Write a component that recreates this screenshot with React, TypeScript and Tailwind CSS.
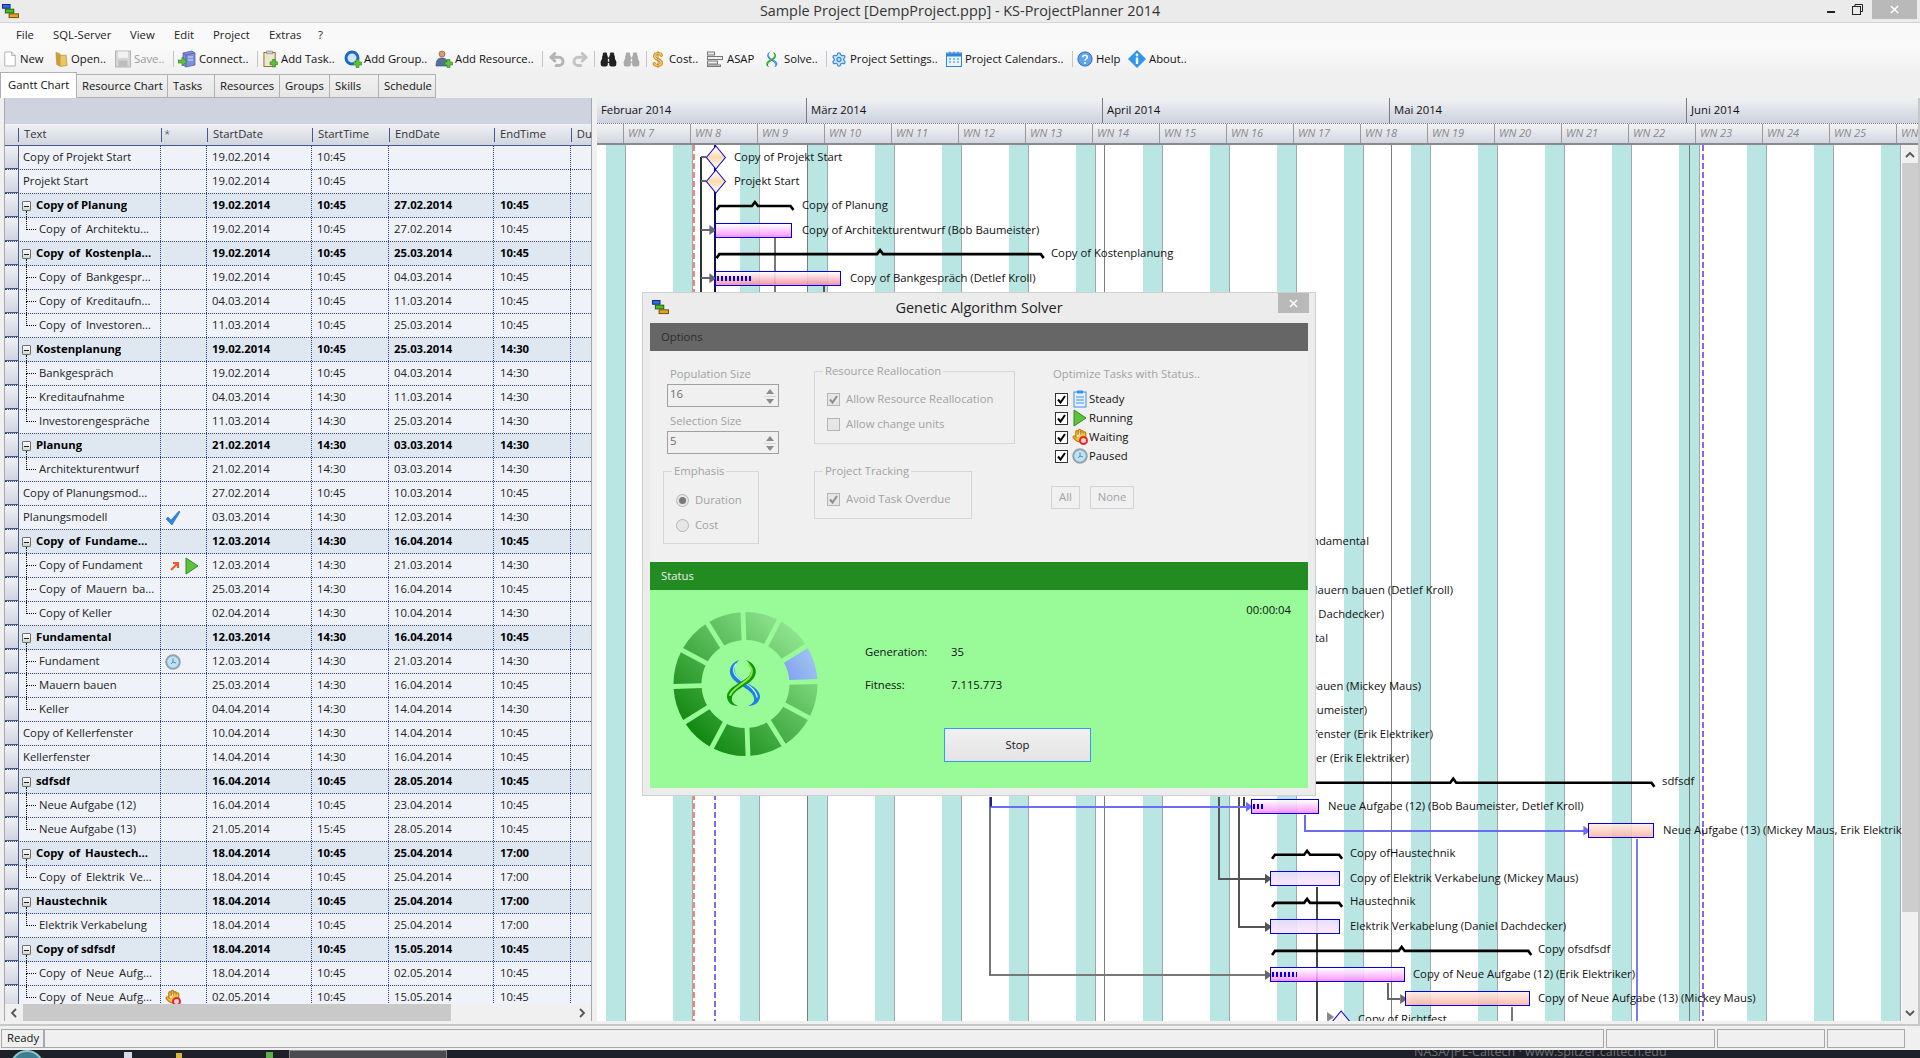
import type { JSX, ReactNode } from "react";
import { Binoculars, Hand, Redo2, Settings, Undo2 } from "lucide-react";

type Row = {
  text: string;
  kind: "top" | "group" | "child" | "last";
  start: string;
  startTime: string;
  end?: string;
  endTime?: string;
  icon?: "check" | "running" | "paused" | "waiting";
  wide?: boolean;
};

const g = (text: string, start: string, startTime: string, end: string, endTime: string, wide = false): Row => ({ text, kind: "group", start, startTime, end, endTime, wide });
const c = (text: string, start: string, startTime: string, end: string, endTime: string, wide = false): Row => ({ text, kind: "child", start, startTime, end, endTime, wide });
const l = (text: string, start: string, startTime: string, end: string, endTime: string, wide = false): Row => ({ text, kind: "last", start, startTime, end, endTime, wide });
const t = (text: string, start: string, startTime: string, end?: string, endTime?: string): Row => ({ text, kind: "top", start, startTime, end, endTime });

const ROWS: Row[] = [
  t("Copy of Projekt Start", "19.02.2014", "10:45"),
  t("Projekt Start", "19.02.2014", "10:45"),
  g("Copy of Planung", "19.02.2014", "10:45", "27.02.2014", "10:45"),
  l("Copy of Architektu...", "19.02.2014", "10:45", "27.02.2014", "10:45", true),
  g("Copy of Kostenpla...", "19.02.2014", "10:45", "25.03.2014", "10:45", true),
  c("Copy of Bankgespr...", "19.02.2014", "10:45", "04.03.2014", "10:45", true),
  c("Copy of Kreditaufn...", "04.03.2014", "10:45", "11.03.2014", "10:45", true),
  l("Copy of Investoren...", "11.03.2014", "10:45", "25.03.2014", "10:45", true),
  g("Kostenplanung", "19.02.2014", "10:45", "25.03.2014", "14:30"),
  c("Bankgespräch", "19.02.2014", "10:45", "04.03.2014", "14:30"),
  c("Kreditaufnahme", "04.03.2014", "14:30", "11.03.2014", "14:30"),
  l("Investorengespräche", "11.03.2014", "14:30", "25.03.2014", "14:30"),
  g("Planung", "21.02.2014", "14:30", "03.03.2014", "14:30"),
  l("Architekturentwurf", "21.02.2014", "14:30", "03.03.2014", "14:30"),
  t("Copy of Planungsmod...", "27.02.2014", "10:45", "10.03.2014", "10:45"),
  { ...t("Planungsmodell", "03.03.2014", "14:30", "12.03.2014", "14:30"), icon: "check" },
  g("Copy of Fundame...", "12.03.2014", "14:30", "16.04.2014", "10:45", true),
  { ...c("Copy of Fundament", "12.03.2014", "14:30", "21.03.2014", "14:30"), icon: "running" },
  c("Copy of Mauern ba...", "25.03.2014", "14:30", "16.04.2014", "10:45", true),
  l("Copy of Keller", "02.04.2014", "14:30", "10.04.2014", "14:30"),
  g("Fundamental", "12.03.2014", "14:30", "16.04.2014", "10:45"),
  { ...c("Fundament", "12.03.2014", "14:30", "21.03.2014", "14:30"), icon: "paused" },
  c("Mauern bauen", "25.03.2014", "14:30", "16.04.2014", "10:45"),
  l("Keller", "04.04.2014", "14:30", "14.04.2014", "14:30"),
  t("Copy of Kellerfenster", "10.04.2014", "14:30", "14.04.2014", "10:45"),
  t("Kellerfenster", "14.04.2014", "14:30", "16.04.2014", "10:45"),
  g("sdfsdf", "16.04.2014", "10:45", "28.05.2014", "10:45"),
  c("Neue Aufgabe (12)", "16.04.2014", "10:45", "23.04.2014", "10:45"),
  l("Neue Aufgabe (13)", "21.05.2014", "15:45", "28.05.2014", "10:45"),
  g("Copy of Haustech...", "18.04.2014", "10:45", "25.04.2014", "17:00", true),
  l("Copy of Elektrik Ve...", "18.04.2014", "10:45", "25.04.2014", "17:00", true),
  g("Haustechnik", "18.04.2014", "10:45", "25.04.2014", "17:00"),
  l("Elektrik Verkabelung", "18.04.2014", "10:45", "25.04.2014", "17:00"),
  g("Copy of sdfsdf", "18.04.2014", "10:45", "15.05.2014", "10:45"),
  c("Copy of Neue Aufg...", "18.04.2014", "10:45", "02.05.2014", "10:45", true),
  { ...l("Copy of Neue Aufg...", "02.05.2014", "10:45", "15.05.2014", "10:45", true), icon: "waiting" },
];

const WEEK_X = Array.from({ length: 20 }, (_, i) => 625 + 67 * i);
const MONTH_X = [807, 1103, 1390, 1687];

const BARS = [
  { x: 716, y: 223, w: 77, kind: "pink", done: 0 },
  { x: 716, y: 271, w: 126, kind: "rose", done: 36 },
  { x: 1252, y: 799, w: 68, kind: "pink", done: 12 },
  { x: 1589, y: 823, w: 66, kind: "salmon", done: 0 },
  { x: 1271, y: 871, w: 70, kind: "lav", done: 0 },
  { x: 1271, y: 919, w: 70, kind: "lav", done: 0 },
  { x: 1271, y: 967, w: 135, kind: "pink", done: 25 },
  { x: 1406, y: 991, w: 125, kind: "salmon", done: 0 },
];

const BAR_FILL: Record<string, string> = {
  pink: "bg-gradient-to-b from-white/90 to-[#ff80ff]/85",
  rose: "bg-gradient-to-b from-white/90 to-[#f08aa0]/90",
  salmon: "bg-gradient-to-b from-[#ffeee8]/90 to-[#ffb0a0]/85",
  lav: "bg-gradient-to-b from-[#e6dcf8]/90 to-[#ffe6ff]/90",
};

const LABELS: { text: string; x?: number; endX?: number; y: number }[] = [
  { text: "Copy of Projekt Start", x: 735, y: 157 },
  { text: "Projekt Start", x: 735, y: 181 },
  { text: "Copy of Planung", x: 803, y: 205 },
  { text: "Copy of Architekturentwurf (Bob Baumeister)", x: 803, y: 230 },
  { text: "Copy of Kostenplanung", x: 1052, y: 253 },
  { text: "Copy of Bankgespräch (Detlef Kroll)", x: 851, y: 278 },
  { text: "Copy of Fundamental", endX: 1366, y: 541 },
  { text: "Copy of Mauern bauen (Detlef Kroll)", endX: 1450, y: 590 },
  { text: "Copy of Keller (Daniel Dachdecker)", endX: 1381, y: 614 },
  { text: "Fundamental", endX: 1325, y: 638 },
  { text: "Mauern bauen (Mickey Maus)", endX: 1418, y: 686 },
  { text: "Keller (Bob Baumeister)", endX: 1364, y: 710 },
  { text: "Copy of Kellerfenster (Erik Elektriker)", endX: 1430, y: 734 },
  { text: "Kellerfenster (Erik Elektriker)", endX: 1406, y: 758 },
  { text: "sdfsdf", x: 1663, y: 781 },
  { text: "Neue Aufgabe (12) (Bob Baumeister, Detlef Kroll)", x: 1329, y: 806 },
  { text: "Neue Aufgabe (13) (Mickey Maus, Erik Elektriker)", x: 1664, y: 830 },
  { text: "Copy ofHaustechnik", x: 1351, y: 853 },
  { text: "Copy of Elektrik Verkabelung (Mickey Maus)", x: 1351, y: 878 },
  { text: "Haustechnik", x: 1351, y: 901 },
  { text: "Elektrik Verkabelung (Daniel Dachdecker)", x: 1351, y: 926 },
  { text: "Copy ofsdfsdf", x: 1539, y: 949 },
  { text: "Copy of Neue Aufgabe (12) (Erik Elektriker)", x: 1414, y: 974 },
  { text: "Copy of Neue Aufgabe (13) (Mickey Maus)", x: 1539, y: 998 },
  { text: "Copy of Richtfest", x: 1359, y: 1019 },
];

const BRACKETS = [
  { x1: 716, x2: 793, y: 206 },
  { x1: 716, x2: 1043, y: 254 },
  { x1: 950, x2: 1653, y: 782, tip: 1452 },
  { x1: 1271, x2: 1341, y: 854 },
  { x1: 1271, x2: 1341, y: 902 },
  { x1: 1271, x2: 1530, y: 950 },
];

const LINES = [
  { d: "M701 157V292", s: "#333", w: 2 },
  { d: "M701 157H706M701 181H706", s: "#666", w: 2 },
  { d: "M701 230H710M701 278H710", s: "#666", w: 2 },
  { d: "M715 145V292", s: "#10104a", w: 2 },
  { d: "M775 237V292", s: "#777", w: 2 },
  { d: "M823 285V292", s: "#555", w: 2 },
  { d: "M1218 796V878H1264", s: "#555", w: 2 },
  { d: "M1238 796V926H1264", s: "#555", w: 2 },
  { d: "M1243 796V806", s: "#444", w: 2 },
  { d: "M989 796V974H1264", s: "#777", w: 2 },
  { d: "M990 796V806", s: "#20208a", w: 2 },
  { d: "M990 806H1245", s: "#6c6cf2", w: 2 },
  { d: "M1304 814V830H1583", s: "#6c6cf2", w: 2 },
  { d: "M1636 838V1020", s: "#7a7af5", w: 2 },
  { d: "M1316 886V1020", s: "#444", w: 1.5 },
  { d: "M1387 982V998H1399", s: "#666", w: 2 },
  { d: "M1511 1006V1020", s: "#777", w: 2 },
];

const ARROWS = [
  { x: 716, y: 230, f: "#666" },
  { x: 716, y: 278, f: "#666" },
  { x: 1252, y: 806, f: "#6c6cf2" },
  { x: 1589, y: 830, f: "#6c6cf2" },
  { x: 1271, y: 878, f: "#555" },
  { x: 1271, y: 926, f: "#555" },
  { x: 1271, y: 974, f: "#666" },
  { x: 1406, y: 998, f: "#666" },
  { x: 1333, y: 1016, f: "#888" },
];

function AppLogo({ className }: { className: string }): JSX.Element {
  return (
    <svg viewBox="0 0 18 16" className={className}>
      <rect x="0.5" y="0.5" width="8" height="4" fill="#2a6cf0" stroke="#102070" />
      <rect x="3.5" y="5.5" width="9" height="4" fill="#3fc41a" stroke="#1d5c10" />
      <rect x="7.5" y="10.5" width="10" height="4" fill="#e3a51c" stroke="#6b4a08" />
    </svg>
  );
}

function DocIcon(): JSX.Element {
  return (
    <svg viewBox="0 0 16 18" className="h-[18px] w-[14px] shrink-0">
      <path d="M2 1h8l4 4v12H2z" fill="#fff" stroke="#a9a9a9" />
      <path d="M10 1v4h4" fill="#eee" stroke="#a9a9a9" />
    </svg>
  );
}

function FolderIcon(): JSX.Element {
  return (
    <svg viewBox="0 0 14 18" className="h-[18px] w-[13px] shrink-0">
      <path d="M1 2l4 1 1 2 6 0 1 11-7 1-4-2z" fill="#e9c66a" stroke="#b08b35" strokeWidth=".7" />
      <path d="M1 2l5 3v12l-4-2z" fill="#c99c3c" />
    </svg>
  );
}

function SaveIcon(): JSX.Element {
  return (
    <svg viewBox="0 0 16 18" className="h-[18px] w-[16px] shrink-0">
      <rect x="0.5" y="1" width="15" height="16" fill="#d6d6d6" stroke="#b5b5b5" />
      <rect x="3" y="1.5" width="10" height="6.5" fill="#f1f1f1" />
      <rect x="3.5" y="10.5" width="9" height="6" fill="#bdbdbd" />
    </svg>
  );
}

function PlusBadge({ x = 8, y = 9 }: { x?: number; y?: number }): JSX.Element {
  return <path transform={`translate(${x} ${y})`} d="M2.5 0h3v2.5H8v3H5.5V8h-3V5.5H0v-3h2.5z" fill="#5cc23a" stroke="#2f7d1f" strokeWidth=".6" />;
}

function ConnectIcon(): JSX.Element {
  return (
    <svg viewBox="0 0 18 18" className="h-[18px] w-[18px] shrink-0">
      <path d="M5 3l9-2 3 2v12l-9 2-3-2z" fill="#7f8fd8" stroke="#48559c" strokeWidth=".7" />
      <path d="M5 3l3 2 9-2M8 5v12" fill="none" stroke="#48559c" strokeWidth=".7" />
      <path d="M10 7h5M10 10h5" stroke="#d8defa" />
      <path d="M0 10h4V7l5 4.5L4 16v-3H0z" fill="#5cc23a" stroke="#2f7d1f" strokeWidth=".6" />
    </svg>
  );
}

function TaskIcon(): JSX.Element {
  return (
    <svg viewBox="0 0 16 18" className="h-[18px] w-[15px] shrink-0">
      <rect x="1" y="2" width="12" height="15" fill="#eee7d0" stroke="#8d6a34" />
      <rect x="4" y="0.5" width="6" height="3" fill="#cfcfcf" stroke="#777" strokeWidth=".6" />
      <PlusBadge x={7.5} y={9.5} />
    </svg>
  );
}

function GroupIcon(): JSX.Element {
  return (
    <svg viewBox="0 0 18 18" className="h-[18px] w-[18px] shrink-0">
      <circle cx="8" cy="8" r="6" fill="#cfe6fa" stroke="#1867c9" strokeWidth="3" />
      <PlusBadge x={9.5} y={9.5} />
    </svg>
  );
}

function ResourceIcon(): JSX.Element {
  return (
    <svg viewBox="0 0 18 18" className="h-[18px] w-[18px] shrink-0">
      <circle cx="7" cy="4" r="3" fill="#d79b6a" stroke="#7c5330" strokeWidth=".6" />
      <path d="M1 16c0-6 2-8 6-8s6 2 6 8z" fill="#54719c" stroke="#2f4366" strokeWidth=".6" />
      <PlusBadge x={9.5} y={9.5} />
    </svg>
  );
}

function CostIcon(): JSX.Element {
  return (
    <svg viewBox="0 0 12 20" className="h-[19px] w-[12px] shrink-0" fill="none">
      <path d="M9.5 5.5C8.5 3 2.5 3 2.5 6.5s7 3.5 7 7-6.5 3.5-7.5 1" stroke="#c98a22" strokeWidth="3.4" strokeLinecap="round" />
      <path d="M9.5 5.5C8.5 3 2.5 3 2.5 6.5s7 3.5 7 7-6.5 3.5-7.5 1" stroke="#f7cf7c" strokeWidth="1.4" strokeLinecap="round" />
      <path d="M6 1v18" stroke="#c98a22" strokeWidth="1" />
    </svg>
  );
}

function AsapIcon(): JSX.Element {
  return (
    <svg viewBox="0 0 16 16" className="h-[16px] w-[16px] shrink-0" fill="#eee" stroke="#777">
      <rect x="0.5" y="1" width="7" height="3" />
      <rect x="0.5" y="5.5" width="15" height="3" />
      <rect x="0.5" y="10" width="10" height="3" />
      <rect x="0.5" y="14" width="13" height="1.5" />
    </svg>
  );
}

function DnaRibbons(): JSX.Element {
  return (
    <>
      <path d="M66 48C57 51 54 60 60 67C66 74 80 78 81 86C82 90 79 92 75 94C82 94 87 90 87 84C86 75 72 71 65 65C60 60 61 53 66 48Z" fill="#1a80e8" />
      <path d="M63 52C59 57 60 62 65 66C71 71 83 76 84 85" fill="none" stroke="#c8eaff" strokeWidth="1.4" strokeLinecap="round" />
      <path d="M73 48C82 51 86 60 80 67C74 74 60 78 59 86C58 90 61 92 65 94C58 94 54 90 54 84C55 75 68 71 75 65C80 60 79 53 73 48Z" fill="#0f960f" />
      <path d="M76 53C80 57 80 62 76 66C70 72 60 76 57 83" fill="none" stroke="#8fe83c" strokeWidth="2" strokeLinecap="round" />
    </>
  );
}

function DnaMini(): JSX.Element {
  return (
    <svg viewBox="50 46 42 50" className="h-[19px] w-[14px] shrink-0">
      <DnaRibbons />
    </svg>
  );
}

function CalendarIcon(): JSX.Element {
  return (
    <svg viewBox="0 0 16 16" className="h-[16px] w-[16px] shrink-0">
      <rect x="0.5" y="2" width="15" height="13.5" fill="#eaf4ff" stroke="#2d86d6" />
      <rect x="1" y="2.5" width="14" height="3" fill="#2d86d6" />
      <path d="M4 0.5v3M8 0.5v3M12 0.5v3" stroke="#2d86d6" />
      <path d="M3 8h2M7 8h2M11 8h2M3 11h2M7 11h2M11 11h2" stroke="#2d86d6" />
    </svg>
  );
}

function HelpIcon(): JSX.Element {
  return (
    <svg viewBox="0 0 18 18" className="h-[18px] w-[16px] shrink-0" fill="none">
      <circle cx="9" cy="9" r="8" fill="#5fa3ea" stroke="#1c62b8" />
      <path d="M6.5 7c0-3 5-3 5 0 0 2-2.500 2-2.500 4" stroke="#fff" strokeWidth="1.8" />
      <circle cx="9" cy="13.5" r="1.1" fill="#fff" />
    </svg>
  );
}

function InfoIcon(): JSX.Element {
  return (
    <svg viewBox="0 0 18 18" className="h-[18px] w-[18px] shrink-0">
      <path d="M9 0l9 9-9 9-9-9z" fill="#2f96ec" />
      <circle cx="9" cy="5" r="1.4" fill="#fff" />
      <rect x="7.8" y="7.5" width="2.4" height="6.5" fill="#fff" />
    </svg>
  );
}

function BlueCheck(): JSX.Element {
  return (
    <svg viewBox="0 0 16 16" className="h-[16px] w-[16px]">
      <path d="M1 9l2-2 3 3 8-9 1 1-8 13z" fill="#2f86e2" stroke="#1a5fb0" strokeWidth=".5" />
    </svg>
  );
}

function PlayIcon({ className = "h-[18px] w-[14px]" }: { className?: string }): JSX.Element {
  return (
    <svg viewBox="0 0 14 18" className={className}>
      <path d="M1 1l12 8-12 8z" fill="#5ec23c" stroke="#2f8a1f" />
    </svg>
  );
}

function ClockIcon(): JSX.Element {
  return (
    <svg viewBox="0 0 16 16" className="h-[16px] w-[16px]">
      <circle cx="8" cy="8" r="6.8" fill="#b8e4f7" stroke="#97a3ab" strokeWidth="2" />
      <path d="M8 4.500v3.500l-2 2M8 8l3 1" stroke="#6d8296" fill="none" />
    </svg>
  );
}

function WaitingIcon(): JSX.Element {
  return (
    <div className="relative h-[18px] w-[16px]">
      <Hand className="h-[15px] w-[15px] fill-[#f3c23c] text-[#c0831a]" strokeWidth={2} />
      <div className="absolute bottom-[1px] right-0 h-[9px] w-[9px] rounded-full border-2 border-[#e02a2a] bg-[#f8d0d0]" />
    </div>
  );
}

function ClipIcon(): JSX.Element {
  return (
    <svg viewBox="0 0 14 18" className="h-[18px] w-[14px]">
      <rect x="1" y="2" width="12" height="15" fill="#e6f3ff" stroke="#3b8fe0" />
      <rect x="4" y="0.5" width="6" height="3" fill="#3b8fe0" />
      <path d="M3 7h8M3 10h8M3 13h8" stroke="#3b8fe0" />
    </svg>
  );
}

function MenuBar(): JSX.Element {
  return (
    <div className="flex h-[24px] shrink-0 items-center bg-[#f9f9f9] pl-[16px] text-[#222]">
      <span className="w-[37px]">File</span>
      <span className="w-[77px]">SQL-Server</span>
      <span className="w-[44px]">View</span>
      <span className="w-[39px]">Edit</span>
      <span className="w-[56px]">Project</span>
      <span className="w-[49px]">Extras</span>
      <span>?</span>
    </div>
  );
}

function Tool({ icon, label, className, disabled }: { icon: ReactNode; label?: string; className: string; disabled?: boolean }): JSX.Element {
  return (
    <div className={`flex shrink-0 items-center gap-[3px] ${className} ${disabled ? "text-[#9a9a9a]" : "text-[#111]"}`}>
      {icon}
      {label && <span className="whitespace-nowrap">{label}</span>}
    </div>
  );
}

function Sep({ className }: { className: string }): JSX.Element {
  return (
    <div className={`flex shrink-0 ${className}`}>
      <div className="h-[16px] w-px bg-[#c4c4c4]" />
    </div>
  );
}

function Toolbar(): JSX.Element {
  return (
    <div className="flex h-[24px] shrink-0 items-center bg-gradient-to-b from-[#fafafa] to-[#f1f1f1] pl-[3px]">
      <Tool icon={<DocIcon />} label="New" className="w-[52px]" />
      <Tool icon={<FolderIcon />} label="Open.." className="w-[60px]" />
      <Tool icon={<SaveIcon />} label="Save.." className="w-[58px]" disabled />
      <Sep className="w-[5px]" />
      <Tool icon={<ConnectIcon />} label="Connect.." className="w-[79px]" />
      <Sep className="w-[6px]" />
      <Tool icon={<TaskIcon />} label="Add Task.." className="w-[81px]" />
      <Tool icon={<GroupIcon />} label="Add Group.." className="w-[91px] [&>span]:-ml-px" />
      <Tool icon={<ResourceIcon />} label="Add Resource.." className="w-[107px] [&>span]:-ml-px" />
      <Sep className="w-[6px]" />
      <Tool icon={<Undo2 className="h-[19px] w-[18px] text-[#b4b4b4]" strokeWidth={4} />} className="w-[23px]" />
      <Tool icon={<Redo2 className="h-[19px] w-[18px] text-[#c4c4c4]" strokeWidth={4} />} className="w-[23px]" />
      <Sep className="w-[6px]" />
      <Tool icon={<Binoculars className="h-[17px] w-[17px] fill-[#222] text-[#222]" />} className="w-[23px]" />
      <Tool icon={<Binoculars className="h-[17px] w-[17px] fill-[#aaa] text-[#aaa]" />} className="w-[23px]" />
      <Sep className="w-[6px]" />
      <Tool icon={<CostIcon />} label="Cost.." className="w-[55px] [&>span]:ml-[2px]" />
      <Tool icon={<AsapIcon />} label="ASAP" className="w-[58px] [&>span]:ml-px" />
      <Tool icon={<DnaMini />} label="Solve.." className="w-[61px] [&>span]:ml-[2px]" />
      <Sep className="w-[5px]" />
      <Tool icon={<Settings className="h-[17px] w-[16px] fill-[#cfe5fa] text-[#3f8fdc]" />} label="Project Settings.." className="w-[115px]" />
      <Tool icon={<CalendarIcon />} label="Project Calendars.." className="w-[126px]" />
      <Sep className="w-[5px]" />
      <Tool icon={<HelpIcon />} label="Help" className="w-[51px]" />
      <Tool icon={<InfoIcon />} label="About.." className="w-[90px]" />
    </div>
  );
}

function Tabs(): JSX.Element {
  const tabClass = "flex h-[24px] shrink-0 items-center border border-l-0 border-[#b0b0b0] bg-gradient-to-b from-[#f2f2f2] to-[#e6e6e6] pl-[5px]";
  return (
    <div className="relative z-[1] -mb-px flex h-[27px] shrink-0 items-end bg-[#f0f0f0] text-[#111]">
      <div className="flex h-[26px] w-[77px] shrink-0 items-center border border-b-0 border-[#b0b0b0] bg-white pl-[7px]">Gantt Chart</div>
      <div className={`${tabClass} w-[91px]`}>Resource Chart</div>
      <div className={`${tabClass} w-[47px]`}>Tasks</div>
      <div className={`${tabClass} w-[65px]`}>Resources</div>
      <div className={`${tabClass} w-[50px]`}>Groups</div>
      <div className={`${tabClass} w-[49px]`}>Skills</div>
      <div className={`${tabClass} w-[57px]`}>Schedule</div>
    </div>
  );
}

function Expander(): JSX.Element {
  return (
    <div className="ml-[3px] flex h-full w-[9px] shrink-0 flex-col items-center">
      <div className="h-[7px] shrink-0" />
      <div className="flex h-[10px] w-[9px] shrink-0 items-center justify-center rounded-[1px] border border-[#707070] bg-gradient-to-b from-white to-[#d4d4d4]">
        <div className="h-px w-[5px] bg-[#222]" />
      </div>
      <div className="flex-1 border-l border-dotted border-black" />
    </div>
  );
}

function TreeLine({ last }: { last: boolean }): JSX.Element {
  return (
    <div className="ml-[7px] flex h-full w-[10px] shrink-0 flex-col">
      <div className="h-[12px] shrink-0 border-b border-l border-dotted border-black" />
      {!last && <div className="flex-1 border-l border-dotted border-black" />}
    </div>
  );
}

function StatusCellIcon({ icon }: { icon: Row["icon"] }): JSX.Element | null {
  if (icon === "check") return <BlueCheck />;
  if (icon === "paused") return <ClockIcon />;
  if (icon === "waiting") return <WaitingIcon />;
  if (icon === "running") {
    return (
      <div className="flex items-center gap-[5px] pl-[5px]">
        <svg viewBox="0 0 10 10" className="h-[10px] w-[10px]">
          <path d="M1 9l6-6M3 2h5v5" fill="none" stroke="#ef5a1c" strokeWidth="2" />
        </svg>
        <PlayIcon />
      </div>
    );
  }
  return null;
}

function GridRow({ row }: { row: Row }): JSX.Element {
  const bold = row.kind === "group";
  const cell = "flex h-full shrink-0 items-center border-r border-dotted border-[#2b3f8c] pl-[5px]";
  return (
    <div className={`flex h-[24px] shrink-0 border-b border-dotted border-[#2b3f8c] ${bold ? "bg-[#dfe7f0] font-bold text-black" : "bg-[#eff3f9] text-[#222]"}`}>
      <div className="h-full w-[14px] shrink-0 border-b border-r border-solid border-[#47588f] bg-gradient-to-b from-[#f0f1f5] to-[#cfd4e0]" />
      <div className={`${cell} w-[142px] !pl-0`}>
        {row.kind === "top" && <div className="w-[4px]" />}
        {row.kind === "group" && <Expander />}
        {row.kind === "child" && <TreeLine last={false} />}
        {row.kind === "last" && <TreeLine last />}
        <span className={`overflow-hidden whitespace-nowrap ${row.wide ? "[word-spacing:2px]" : ""} ${row.kind === "group" ? "ml-[5px]" : row.kind === "top" ? "" : "ml-[3px]"}`}>{row.text}</span>
      </div>
      <div className={`${cell} w-[46px] !pl-[4px] overflow-hidden`}>
        <StatusCellIcon icon={row.icon} />
      </div>
      <div className={`${cell} w-[105px]`}>{row.start}</div>
      <div className={`${cell} w-[77px]`}>{row.startTime}</div>
      <div className={`${cell} w-[105px]`}>{row.end}</div>
      <div className={`${cell} w-[77px] !pl-[6px]`}>{row.endTime}</div>
      <div className="h-full flex-1" />
    </div>
  );
}

function HeadCell({ text, className }: { text: string; className: string }): JSX.Element {
  return (
    <div className={`flex h-full shrink-0 items-center ${className}`}>
      <div className="h-[14px] w-px bg-[#47588f]" />
      <span className="pl-[5px] text-[#333]">{text}</span>
    </div>
  );
}

function TaskGrid(): JSX.Element {
  return (
    <div className="ml-[4px] flex h-full w-[588px] shrink-0 flex-col border-l border-r border-[#a8a8a8] bg-[#f0f0f0]">
      <div className="h-[26px] shrink-0 bg-[#cdd3df]" />
      <div className="flex h-[22px] shrink-0 border-b border-[#47588f] bg-gradient-to-b from-[#f0f1f4] to-[#d0d5df]">
        <div className="w-[13px] shrink-0" />
        <HeadCell text="Text" className="w-[143px]" />
        <HeadCell text="*" className="w-[46px] [&>span]:!pl-[2px] [&>span]:font-light" />
        <HeadCell text="StartDate" className="w-[105px]" />
        <HeadCell text="StartTime" className="w-[77px]" />
        <HeadCell text="EndDate" className="w-[105px]" />
        <HeadCell text="EndTime" className="w-[77px]" />
        <HeadCell text="Du" className="w-[21px] overflow-hidden" />
      </div>
      <div className="flex min-h-0 flex-1 flex-col overflow-hidden">
        {ROWS.map((row, i) => (
          <GridRow key={i} row={row} />
        ))}
      </div>
      <div className="flex h-[17px] shrink-0 items-center bg-[#f0f0f0]">
        <svg viewBox="0 0 8 10" className="ml-[5px] h-[10px] w-[8px]" fill="none" stroke="#555" strokeWidth="1.8">
          <path d="M6 1L2 5l4 4" />
        </svg>
        <div className="ml-[5px] h-full w-[428px] bg-[#c9c9c9]" />
        <div className="flex-1" />
        <svg viewBox="0 0 8 10" className="mr-[5px] h-[10px] w-[8px]" fill="none" stroke="#555" strokeWidth="1.8">
          <path d="M2 1l4 4-4 4" />
        </svg>
      </div>
    </div>
  );
}

function bracketPath(x1: number, x2: number, y: number, tip?: number): string {
  const cx = tip ?? (x1 + x2) / 2;
  return `M${x1} ${y + 4}L${x1 + 3} ${y}H${cx - 3}L${cx} ${y - 4}L${cx + 3} ${y}H${x2 - 3}L${x2} ${y + 4}`;
}

function GanttCanvas(): JSX.Element {
  return (
    <div className="relative min-w-0 flex-1 overflow-hidden bg-white">
      <svg viewBox="598 145 1301 875" className="absolute inset-0 h-full w-full" shapeRendering="crispEdges">
        <defs>
          <linearGradient id="ms" x1="0" y1="0" x2="0" y2="1">
            <stop offset="0" stopColor="#fff" />
            <stop offset="0.5" stopColor="#fbdcae" />
            <stop offset="1" stopColor="#fff" />
          </linearGradient>
        </defs>
        {WEEK_X.map((x) => (
          <g key={x}>
            <rect x={x - 19} y="145" width="19" height="875" fill="#b9e6e2" />
            <rect x={x} y="145" width="1" height="875" fill="#9fa8a8" />
          </g>
        ))}
        {MONTH_X.map((x) => (
          <rect key={x} x={x} y="145" width="1" height="875" fill="#7c7c7c" />
        ))}
        <path d="M693.5 145V1020" stroke="#ff7f7f" strokeWidth="2" strokeDasharray="6 3" />
        <path d="M715 145V1020" stroke="#7b6cf0" strokeWidth="2" strokeDasharray="6 3" />
        <path d="M1701 145V1020" stroke="#7b6cf0" strokeWidth="2" strokeDasharray="6 3" />
        {LINES.map((line, i) => (
          <path key={i} d={line.d} fill="none" stroke={line.s} strokeWidth={line.w} />
        ))}
        <g shapeRendering="auto">
          {ARROWS.map((a, i) => (
            <path key={i} d={`M${a.x} ${a.y}l-7 -5v10z`} fill={a.f} />
          ))}
          {BRACKETS.map((b, i) => (
            <path key={i} d={bracketPath(b.x1, b.x2, b.y, b.tip)} fill="none" stroke="#000" strokeWidth="2.6" />
          ))}
          <path d="M715.5 146l9.5 11.5-9.5 11.5-9.5-11.5z" fill="url(#ms)" stroke="#0000e0" />
          <path d="M715.5 170l9.5 11.5-9.5 11.5-9.5-11.5z" fill="url(#ms)" stroke="#0000e0" />
          <path d="M1340 1010l9.5 11.5-9.5 11.5-9.5-11.5z" fill="#fbeef5" stroke="#0000e0" />
        </g>
      </svg>
      {LABELS.map((label) => (
        <div
          key={label.text}
          className="absolute h-[16px] whitespace-nowrap leading-[16px] text-[#111]"
          style={label.endX ? { right: 1899 - label.endX, top: label.y - 153 } : { left: (label.x ?? 0) - 598, top: label.y - 153 }}
        >
          {label.text}
        </div>
      ))}
      {BARS.map((bar, i) => (
        <div
          key={i}
          className={`absolute flex h-[15px] items-center border-[1.5px] border-[#0000e6] pl-px ${BAR_FILL[bar.kind]}`}
          style={{ left: bar.x - 598, top: bar.y - 145, width: bar.w }}
        >
          {bar.done > 0 && <div className="h-[5px] bg-[repeating-linear-gradient(90deg,#0000e0_0_2px,transparent_2px_4px)]" style={{ width: bar.done }} />}
        </div>
      ))}
    </div>
  );
}

const MONTHS = [
  { name: "Februar 2014", w: "w-[209px]" },
  { name: "März 2014", w: "w-[296px]" },
  { name: "April 2014", w: "w-[287px]" },
  { name: "Mai 2014", w: "w-[297px]" },
  { name: "Juni 2014", w: "flex-1" },
];

function GanttPanel(): JSX.Element {
  return (
    <div className="ml-[5px] flex h-full min-w-0 flex-1 flex-col border-r-2 border-[#c8c8c8] pb-[3px]">
      <div className="flex h-[26px] shrink-0 border-b border-dotted border-[#777] bg-gradient-to-b from-[#f0f1f3] to-[#cdd2de] text-[#111]">
        {MONTHS.map((m, i) => (
          <div key={m.name} className={`flex shrink-0 items-center pl-[4px] ${m.w} ${i > 0 ? "border-l border-[#7c7c7c]" : ""}`}>
            {m.name}
          </div>
        ))}
      </div>
      <div className="flex h-[21px] shrink-0 overflow-hidden border-b-2 border-[#8a8a8a] bg-gradient-to-b from-[#f3f4f6] to-[#d2d6e0] text-[11px] italic text-[#888]">
        <div className="w-[27px] shrink-0 border-r border-[#9a9a9a]" />
        {WEEK_X.map((x, i) => (
          <div key={x} className="flex w-[67px] shrink-0 items-center border-r border-[#9a9a9a] pl-[4px]">
            {`WN ${i + 7}`}
          </div>
        ))}
      </div>
      <div className="flex min-h-0 flex-1">
        <GanttCanvas />
        <div className="flex w-[16px] shrink-0 flex-col items-center bg-[#f0f0f0]">
          <svg viewBox="0 0 10 8" className="mt-[6px] h-[8px] w-[10px]" fill="none" stroke="#555" strokeWidth="1.8">
            <path d="M1 6l4-4 4 4" />
          </svg>
          <div className="mt-[4px] h-[749px] w-full bg-[#cdcdcd]" />
          <div className="flex-1" />
          <svg viewBox="0 0 10 8" className="mb-[4px] h-[8px] w-[10px]" fill="none" stroke="#555" strokeWidth="1.8">
            <path d="M1 2l4 4 4-4" />
          </svg>
        </div>
      </div>
    </div>
  );
}

function CheckBox({ checked, disabled }: { checked: boolean; disabled?: boolean }): JSX.Element {
  return (
    <div className={`flex h-[13px] w-[13px] shrink-0 items-center justify-center border ${disabled ? "border-[#b4b4b4] bg-[#e6e6e6]" : "border-[#333] bg-white"}`}>
      {checked && (
        <svg viewBox="0 0 11 11" className="h-[11px] w-[11px]" fill="none" stroke={disabled ? "#8e8e8e" : "#000"} strokeWidth="2">
          <path d="M2 5.5l2.5 3L9 2" />
        </svg>
      )}
    </div>
  );
}

function CheckRow({ label, checked, className = "" }: { label: string; checked: boolean; className?: string }): JSX.Element {
  return (
    <div className={`flex h-[16px] items-center gap-[6px] ${className}`}>
      <CheckBox checked={checked} disabled />
      <span>{label}</span>
    </div>
  );
}

function Radio({ label, on, className = "" }: { label: string; on: boolean; className?: string }): JSX.Element {
  return (
    <div className={`flex h-[16px] items-center gap-[6px] ${className}`}>
      <div className="flex h-[13px] w-[13px] shrink-0 items-center justify-center rounded-full border border-[#b4b4b4] bg-[#e6e6e6]">
        {on && <div className="h-[7px] w-[7px] rounded-full bg-[#7a7a7a]" />}
      </div>
      <span>{label}</span>
    </div>
  );
}

function Group({ legend, className, children }: { legend: string; className: string; children: ReactNode }): JSX.Element {
  return (
    <fieldset className={`border border-[#d6d6d6] pl-[12px] ${className}`}>
      <legend className="-ml-[4px] h-[16px] px-[2px] leading-[16px]">{legend}</legend>
      {children}
    </fieldset>
  );
}

function Spinner({ value, className = "" }: { value: string; className?: string }): JSX.Element {
  return (
    <div className={`flex h-[23px] w-[112px] items-center justify-between border border-[#a0a0a0] pl-[2px] pr-[1px] ${className}`}>
      <span className="-mt-[3px] text-[#6e6e6e]">{value}</span>
      <div className="flex h-full w-[14px] flex-col items-center justify-center gap-[2px] pt-px">
        <svg viewBox="0 0 8 5" className="h-[5px] w-[8px]" fill="#8a8a8a">
          <path d="M4 0l4 5H0z" />
        </svg>
        <div className="h-px w-[12px] bg-[#d4d4d4]" />
        <svg viewBox="0 0 8 5" className="h-[5px] w-[8px]" fill="#8a8a8a">
          <path d="M0 0h8L4 5z" />
        </svg>
      </div>
    </div>
  );
}

function OptionsBody(): JSX.Element {
  const statuses = [
    { label: "Steady", icon: <ClipIcon /> },
    { label: "Running", icon: <PlayIcon className="h-[18px] w-[14px]" /> },
    { label: "Waiting", icon: <WaitingIcon /> },
    { label: "Paused", icon: <ClockIcon /> },
  ];
  return (
    <div className="flex h-[211px] shrink-0 bg-[#f0f0f0] pl-[13px] text-[#a2a2a2]">
      <div className="flex w-[116px] shrink-0 flex-col pt-[15px]">
        <div className="ml-[7px] h-[16px] leading-[16px]">Population Size</div>
        <Spinner value="16" className="ml-[4px] mt-[2px]" />
        <div className="ml-[7px] mt-[6px] h-[16px] leading-[16px]">Selection Size</div>
        <Spinner value="5" className="ml-[4px] mt-[2px]" />
        <Group legend="Emphasis" className="mt-[9px] h-[81px] w-[96px]">
          <Radio label="Duration" on className="mt-[13px]" />
          <Radio label="Cost" on={false} className="mt-[9px]" />
        </Group>
      </div>
      <div className="ml-[35px] flex w-[201px] shrink-0 flex-col pt-[12px]">
        <Group legend="Resource Reallocation" className="h-[81px] w-[201px]">
          <CheckRow label="Allow Resource Reallocation" checked className="mt-[12px]" />
          <CheckRow label="Allow change units" checked={false} className="mt-[9px]" />
        </Group>
        <Group legend="Project Tracking" className="mt-[19px] h-[56px] w-[158px]">
          <CheckRow label="Avoid Task Overdue" checked className="mt-[12px]" />
        </Group>
      </div>
      <div className="ml-[36px] flex flex-col pt-[15px]">
        <div className="ml-[2px] h-[16px] whitespace-nowrap leading-[16px]">Optimize Tasks with Status..</div>
        <div className="ml-[4px] mt-[9px] flex flex-col gap-[3px] text-[#111]">
          {statuses.map((s) => (
            <div key={s.label} className="flex h-[16px] items-center">
              <CheckBox checked />
              <div className="ml-[3px] flex w-[18px] shrink-0 justify-center">{s.icon}</div>
              <span>{s.label}</span>
            </div>
          ))}
        </div>
        <div className="mt-[22px] flex gap-[10px]">
          <div className="flex h-[23px] w-[29px] items-center justify-center border border-[#d4d4d4]">All</div>
          <div className="flex h-[23px] w-[44px] items-center justify-center border border-[#d4d4d4]">None</div>
        </div>
      </div>
    </div>
  );
}

function sectorPath(i: number): string {
  const cx = 72.5;
  const cy = 72;
  const R = 72;
  const r = 44;
  const start = 2 + i * 30;
  const end = start + 30;
  const gapO = (Math.asin(2.4 / R) * 180) / Math.PI;
  const gapI = (Math.asin(2.4 / r) * 180) / Math.PI;
  const pt = (rad: number, deg: number) => {
    const a = (deg * Math.PI) / 180;
    return `${(cx + rad * Math.cos(a)).toFixed(2)} ${(cy - rad * Math.sin(a)).toFixed(2)}`;
  };
  return `M${pt(R, start + gapO)}A${R} ${R} 0 0 0 ${pt(R, end - gapO)}L${pt(r, end - gapI)}A${r} ${r} 0 0 1 ${pt(r, start + gapI)}Z`;
}

function SolverWheel(): JSX.Element {
  return (
    <svg viewBox="0 0 145 145" className="mt-[22px] h-[145px] w-[145px] shrink-0">
      <defs>
        <linearGradient id="wheelGreen" gradientUnits="userSpaceOnUse" x1="18" y1="128" x2="125" y2="18">
          <stop offset="0" stopColor="#0c840c" />
          <stop offset="1" stopColor="#92e692" />
        </linearGradient>
        <linearGradient id="wheelBlue" gradientUnits="userSpaceOnUse" x1="100" y1="65" x2="140" y2="40">
          <stop offset="0" stopColor="#7896f2" />
          <stop offset="1" stopColor="#a2c6ee" />
        </linearGradient>
      </defs>
      {Array.from({ length: 12 }, (_, i) => (
        <path key={i} d={sectorPath(i)} fill={i === 0 ? "url(#wheelBlue)" : "url(#wheelGreen)"} />
      ))}
      <DnaRibbons />
    </svg>
  );
}

function StatusBody(): JSX.Element {
  return (
    <div className="flex min-h-0 flex-1 bg-[#98fb98] pl-[23px] text-[#111]">
      <SolverWheel />
      <div className="ml-[47px] flex flex-1 flex-col pt-[12px]">
        <div className="h-[16px] self-end pr-[17px] leading-[16px]">00:00:04</div>
        <div className="mt-[26px] flex h-[16px] leading-[16px]">
          <span className="w-[86px]">Generation:</span>
          <span>35</span>
        </div>
        <div className="mt-[17px] flex h-[16px] leading-[16px]">
          <span className="w-[86px]">Fitness:</span>
          <span>7.115.773</span>
        </div>
        <div className="ml-[79px] mt-[35px] flex h-[34px] w-[147px] items-center justify-center border border-[#3399ff] bg-gradient-to-b from-[#f0f0f0] to-[#e4e4e4]">
          Stop
        </div>
      </div>
    </div>
  );
}

function SolverDialog(): JSX.Element {
  return (
    <div className="absolute left-[642px] top-[292px] z-10 flex h-[504px] w-[674px] flex-col border border-[#cfcfcf] bg-[#ececec] px-[7px] pb-[7px]">
      <div className="relative flex h-[30px] shrink-0 items-center justify-center text-[14.5px] text-[#222]">
        <AppLogo className="absolute left-[2px] top-[7px] h-[15px] w-[17px]" />
        <span>Genetic Algorithm Solver</span>
        <div className="absolute right-[-1px] top-0 flex h-[20px] w-[31px] items-center justify-center bg-[#b9b9b9]">
          <svg viewBox="0 0 10 10" className="h-[9px] w-[9px]" stroke="#fff" strokeWidth="1.6">
            <path d="M1 1l8 8M9 1l-8 8" />
          </svg>
        </div>
      </div>
      <div className="flex h-[28px] shrink-0 items-center bg-[#666] pl-[11px] text-[#2d2d2d]">Options</div>
      <OptionsBody />
      <div className="flex h-[28px] shrink-0 items-center bg-[#228b22] pl-[11px] text-[#f0f0f0]">Status</div>
      <StatusBody />
    </div>
  );
}

function StatusBar(): JSX.Element {
  const cell = "flex h-[19px] shrink-0 items-center border border-[#a8a8a8] bg-[#f0f0f0]";
  return (
    <div className="flex h-[26px] shrink-0 border-t-2 border-[#c8c8c8] bg-[#f0f0f0] pt-[3px]">
      <div className={`${cell} ml-px w-[43px] pl-[5px] text-[#111]`}>Ready</div>
      <div className={`${cell} w-[1560px]`} />
      <div className={`${cell} ml-[2px] w-[109px]`} />
      <div className={`${cell} ml-[2px] w-[108px]`} />
      <div className={`${cell} ml-[2px] w-[78px]`} />
    </div>
  );
}

function Taskbar(): JSX.Element {
  return (
    <div className="flex h-[8px] shrink-0 items-start overflow-hidden bg-[#1d2029]">
      <div className="ml-[10px] h-[34px] w-[34px] shrink-0 rounded-full border-2 border-[#8fc5c9] bg-[#3d7f90]" />
      <div className="ml-[80px] mt-[2px] h-[6px] w-[8px] shrink-0 bg-[#d8d8e8]" />
      <div className="ml-[44px] mt-[3px] h-[5px] w-[6px] shrink-0 bg-[#d8b43a]" />
      <div className="ml-[84px] mt-[2px] h-[6px] w-[7px] shrink-0 bg-[#5fae4a]" />
      <div className="ml-[16px] h-[8px] w-[158px] shrink-0 border border-b-0 border-[#8a8a8a] bg-[#4b4b50]" />
      <div className="ml-[967px] -mt-[6px] whitespace-nowrap text-[12.5px] leading-[16px] text-[#6f6f72]">NASA/JPL-Caltech · www.spitzer.caltech.edu</div>
    </div>
  );
}

function TitleBar(): JSX.Element {
  return (
    <div className="flex h-[23px] shrink-0 border-b border-[#d4d4d4] bg-[#ebebeb]">
      <div className="flex w-[96px] shrink-0 items-start pl-[2px] pt-[4px]">
        <AppLogo className="h-[15px] w-[17px]" />
      </div>
      <div className="flex flex-1 items-center justify-center text-[14.4px] text-[#333]">Sample Project [DempProject.ppp] - KS-ProjectPlanner 2014</div>
      <div className="flex w-[96px] shrink-0 items-start justify-end">
        <div className="mr-[17px] mt-[11px] h-[2px] w-[8px] bg-[#222]" />
        <svg viewBox="0 0 11 11" className="mr-[9px] mt-[4px] h-[11px] w-[11px]" fill="none" stroke="#222">
          <path d="M3 2.5V.5h7.5v7H8.5" />
          <rect x=".5" y="2.5" width="8" height="8" />
        </svg>
        <div className="flex h-[19px] w-[45px] items-center justify-center bg-[#b9b9b9]">
          <svg viewBox="0 0 10 10" className="h-[9px] w-[9px]" stroke="#fff" strokeWidth="1.6">
            <path d="M1 1l8 8M9 1l-8 8" />
          </svg>
        </div>
        <div className="w-[3px]" />
      </div>
    </div>
  );
}

export default function App(): JSX.Element {
  return (
    <div className="relative flex h-[1058px] w-[1920px] flex-col overflow-hidden bg-[#f0f0f0] font-['Open_Sans',sans-serif] text-[11.3px]">
      <TitleBar />
      <MenuBar />
      <Toolbar />
      <Tabs />
      <div className="flex min-h-0 flex-1 border-t border-[#a8a8a8]">
        <div className="h-[923px]">
          <TaskGrid />
        </div>
        <GanttPanel />
      </div>
      <StatusBar />
      <Taskbar />
      <SolverDialog />
    </div>
  );
}
